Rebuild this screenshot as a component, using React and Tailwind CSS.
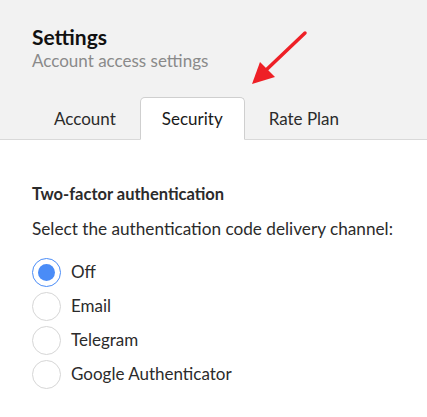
import React from "react";

function Radio({ label, checked }) {
  return (
    <label className="flex items-center h-[34px] gap-[10px]">
      <span
        className={
          "w-[29px] h-[29px] rounded-full border flex items-center justify-center bg-white " +
          (checked ? "border-[#4a8cf7]" : "border-[#d6d6d6]")
        }
      >
        {checked && <span className="w-[17px] h-[17px] rounded-full bg-[#4a8cf7]" />}
      </span>
      <span className="text-[17px] text-[#2b2b2b]">{label}</span>
    </label>
  );
}

export default function App() {
  return (
    <div className="w-[427px] h-[417px] bg-white relative overflow-hidden font-['Lato',sans-serif]">
      <div className="bg-[#f2f2f2] border-b border-[#d9d9d9] h-[140px] flex flex-col">
        <div className="px-8 pt-[23px]">
          <div className="text-[21px] font-bold text-[#111] leading-[27px]">Settings</div>
          <div className="text-[17px] text-[#8a8a8a] leading-[22px]">Account access settings</div>
        </div>
        <div className="mt-auto flex pl-[32px] gap-[2px] -mb-px">
          <div className="px-[21px] h-[43px] flex items-center text-[17px] text-[#2b2b2b] border border-transparent">Account</div>
          <div className="px-[21px] h-[43px] flex items-center text-[17px] text-[#1a1a1a] bg-white border border-[#cfcfcf] border-b-white rounded-t-[5px]">Security</div>
          <div className="px-[21px] h-[43px] flex items-center text-[17px] text-[#2b2b2b] border border-transparent">Rate Plan</div>
        </div>
      </div>
      <div className="px-8 pt-[43px]">
        <div className="text-[16.5px] font-bold text-[#2b2b2b] leading-[22px] whitespace-nowrap">Two-factor authentication</div>
        <div className="text-[17.2px] text-[#2b2b2b] mt-[13px] leading-[22px] whitespace-nowrap">Select the authentication code delivery channel:</div>
        <div className="mt-[15px] flex flex-col">
          <Radio label="Off" checked />
          <Radio label="Email" />
          <Radio label="Telegram" />
          <Radio label="Google Authenticator" />
        </div>
      </div>
      <svg className="absolute left-0 top-0" width="427" height="417" viewBox="0 0 427 417">
        <line x1="305" y1="33" x2="264" y2="72" stroke="#ee2026" strokeWidth="3.5" strokeLinecap="round" />
        <polygon points="252,84 260,62 275,77" fill="#ee2026" />
      </svg>
    </div>
  );
}
